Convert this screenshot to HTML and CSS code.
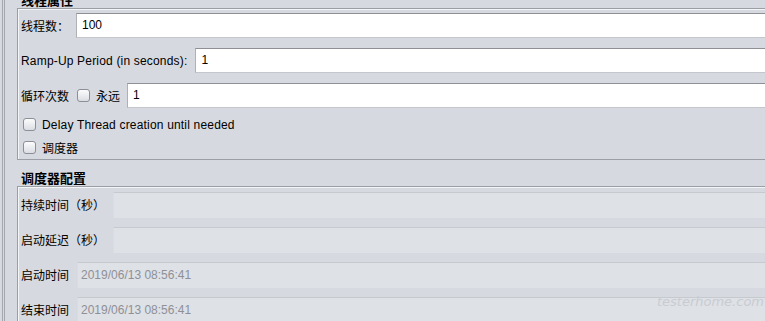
FILE: index.html
```html
<!DOCTYPE html>
<html lang="zh-CN">
<head>
<meta charset="utf-8">
<title>线程组</title>
<link rel="stylesheet" href="styles.css">
</head>
<body>
<div class="frame">
  <div class="frame-inner">
    <div class="group-title first">线程属性</div>
    <div class="group">
      <div class="row">
        <span class="label">线程数：</span>
        <div class="field gap7">100</div>
      </div>
      <div class="row">
        <span class="label latin">Ramp-Up Period (in seconds):</span>
        <div class="field gap8">1</div>
      </div>
      <div class="row">
        <span class="label">循环次数</span>
        <span class="check gap8"></span>
        <span class="label after-check">永远</span>
        <div class="field gap7">1</div>
      </div>
      <div class="check-row first-check">
        <span class="check"></span>
        <span class="label latin after-check">Delay Thread creation until needed</span>
      </div>
      <div class="check-row">
        <span class="check"></span>
        <span class="label after-check">调度器</span>
      </div>
    </div>
    <div class="group-title second">调度器配置</div>
    <div class="group group2">
      <div class="drow">
        <span class="label">持续时间（秒）</span>
        <div class="dfield"></div>
      </div>
      <div class="drow">
        <span class="label">启动延迟（秒）</span>
        <div class="dfield"></div>
      </div>
      <div class="drow">
        <span class="label">启动时间</span>
        <div class="dfield">2019/06/13 08:56:41</div>
      </div>
      <div class="drow">
        <span class="label">结束时间</span>
        <div class="dfield">2019/06/13 08:56:41</div>
      </div>
    </div>
  </div>
</div>
<div class="watermark">testerhome.com</div>
</body>
</html>
```
FILE: styles.css
```css
html, body {
  margin: 0;
  padding: 0;
}
body {
  background: #d6d9df;
  width: 765px;
  height: 321px;
  overflow: hidden;
  position: relative;
  font-family: "Liberation Sans", "Noto Sans CJK SC", sans-serif;
  font-size: 12px;
  color: #000;
}
.frame {
  margin-left: 2px;
  border-left: 1px solid #a4a7ad;
  width: 840px;
}
.frame-inner {
  margin-left: 1px;
  border-left: 1px solid #a4a7ad;
  padding-left: 12px;
}
.group-title {
  font-family: "Noto Sans CJK SC", sans-serif;
  font-weight: bold;
  font-size: 13px;
  line-height: 16px;
  padding-left: 4px;
  color: #000;
}
.group-title.first {
  margin-top: -8px;
  height: 16px;
}
.group-title.second {
  padding-top: 10px;
  height: 16px;
}
.group {
  border: 1px solid #9b9ea4;
  border-right: none;
  box-shadow: inset 1px 1px 0 #f4f5f7;
  padding: 4px 0 0 3px;
}
.group2 {
  padding-top: 5px;
  border-bottom: none;
}
.row {
  display: flex;
  align-items: center;
  height: 25px;
  margin-bottom: 10px;
}
.row:nth-child(3) {
  margin-bottom: 5px;
}
.label {
  font-family: "Noto Sans CJK SC", sans-serif;
  font-size: 12px;
  line-height: 16px;
  white-space: nowrap;
}
.label.latin {
  font-family: "Liberation Sans", sans-serif;
  letter-spacing: 0.18px;
}
.field {
  flex: 1;
  height: 25px;
  box-sizing: border-box;
  background: #fff;
  border: 1px solid #aeb0b5;
  border-top-color: #8e9095;
  border-bottom-color: #c4c6cb;
  padding-left: 5px;
  line-height: 23px;
  font-family: "Liberation Sans", sans-serif;
  font-size: 12px;
}
.gap7 { margin-left: 7px; }
.gap8 { margin-left: 8px; }
.check {
  display: inline-block;
  width: 13px;
  height: 13px;
  box-sizing: border-box;
  border: 1px solid #8c8f95;
  border-radius: 3px;
  background: linear-gradient(#fcfcfd, #dadde2);
  flex: none;
}
.after-check {
  margin-left: 6px;
}
.check-row {
  display: flex;
  align-items: center;
  height: 23px;
  padding-left: 2px;
}
.drow {
  display: flex;
  align-items: center;
  height: 26px;
  margin-bottom: 9px;
}
.dfield {
  flex: 1;
  height: 26px;
  box-sizing: border-box;
  margin-left: 8px;
  background: #dee1e6;
  border-top: 1px solid #c6c9ce;
  border-left: 1px solid #d9dce1;
  padding-left: 3px;
  line-height: 24px;
  color: #8e9096;
  font-family: "Liberation Sans", sans-serif;
  font-size: 12px;
}
.watermark {
  position: absolute;
  right: 1px;
  bottom: 12px;
  font-family: "DejaVu Sans", sans-serif;
  font-weight: 200;
  font-style: italic;
  font-size: 13px;
  color: #c9ccd2;
}
```
